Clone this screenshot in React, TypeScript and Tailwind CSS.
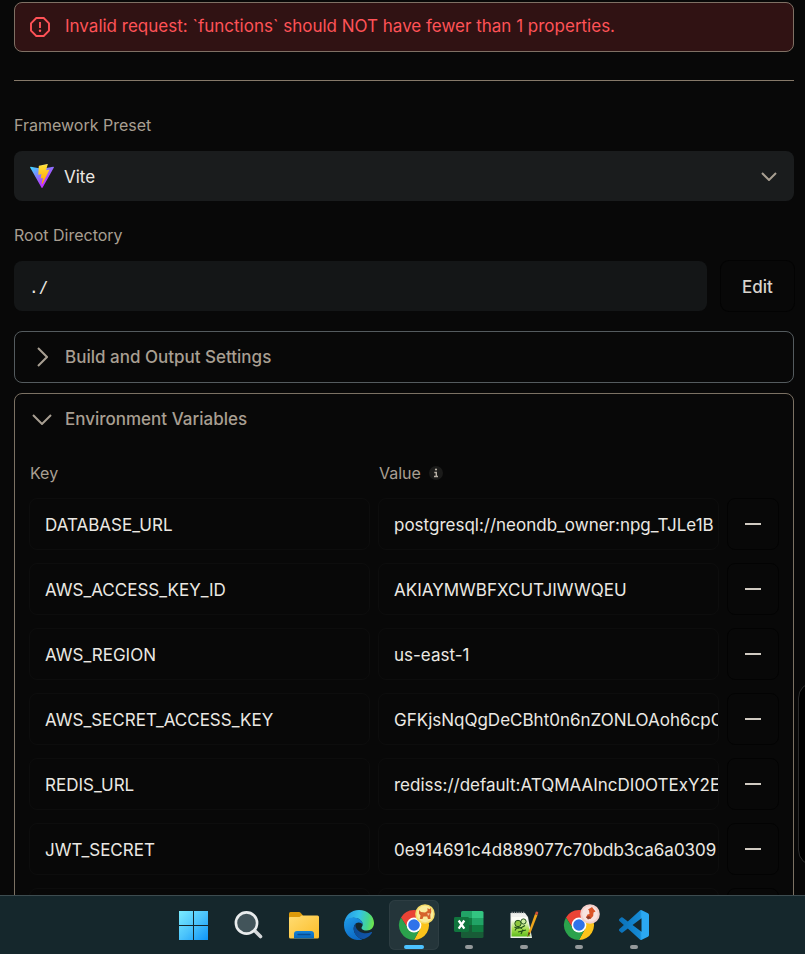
import type { ReactNode } from "react";

const variables = [
  { key: "DATABASE_URL", value: "postgresql://neondb_owner:npg_TJLe1B" },
  { key: "AWS_ACCESS_KEY_ID", value: "AKIAYMWBFXCUTJIWWQEU" },
  { key: "AWS_REGION", value: "us-east-1" },
  { key: "AWS_SECRET_ACCESS_KEY", value: "GFKjsNqQgDeCBht0n6nZONLOAoh6cpC" },
  { key: "REDIS_URL", value: "rediss://default:ATQMAAIncDI0OTExY2E" },
  { key: "JWT_SECRET", value: "0e914691c4d889077c70bdb3ca6a0309" },
  { key: "", value: "" },
];

function ErrorIcon() {
  return (
    <svg className="size-5 shrink-0" viewBox="0 0 20 20" fill="none" stroke="currentColor" strokeWidth="1.9">
      <path d="M6.3 1h7.4L19 6.3v7.4L13.7 19H6.3L1 13.7V6.3z" />
      <path d="M10 5v6" />
      <circle cx="10" cy="13.7" r="1.2" fill="currentColor" stroke="none" />
    </svg>
  );
}

function ViteLogo({ className }: { className: string }) {
  return (
    <svg className={className} viewBox="0 0 256 257">
      <defs>
        <linearGradient id="viteA" x1="-.8%" x2="57.6%" y1="7.7%" y2="78.4%">
          <stop offset="0" stopColor="#41d1ff" />
          <stop offset="1" stopColor="#bd34fe" />
        </linearGradient>
        <linearGradient id="viteB" x1="43.4%" x2="50.3%" y1="2.2%" y2="89%">
          <stop offset="0" stopColor="#ffea83" />
          <stop offset=".083" stopColor="#ffdd35" />
          <stop offset="1" stopColor="#ffa800" />
        </linearGradient>
      </defs>
      <path
        fill="url(#viteA)"
        d="M255.153 37.938L134.897 252.976c-2.483 4.44-8.862 4.466-11.382.048L.875 37.958c-2.746-4.814 1.371-10.646 6.827-9.67l120.385 21.517a6.537 6.537 0 0 0 2.322-.004l117.867-21.483c5.438-.991 9.574 4.796 6.877 9.62Z"
      />
      <path
        fill="url(#viteB)"
        d="M185.432.063L96.44 17.501a3.268 3.268 0 0 0-2.634 3.014l-5.474 92.456a3.268 3.268 0 0 0 3.997 3.378l24.777-5.718c2.318-.535 4.413 1.507 3.936 3.838l-7.361 36.047c-.495 2.426 1.782 4.5 4.151 3.78l15.304-4.649c2.372-.72 4.652 1.36 4.15 3.788l-11.698 56.621c-.732 3.542 3.979 5.473 5.943 2.437l1.313-2.028l72.516-144.72c1.215-2.423-.88-5.186-3.54-4.672l-25.505 4.922c-2.396.462-4.435-1.77-3.759-4.114l16.646-57.705c.677-2.35-1.37-4.583-3.769-4.113Z"
      />
    </svg>
  );
}

function Chevron({ className, d, box }: { className: string; d: string; box: string }) {
  return (
    <svg className={className} viewBox={box} fill="none" stroke="currentColor" strokeWidth="2">
      <path d={d} />
    </svg>
  );
}

function StartIcon() {
  return (
    <svg className="size-[30px]" viewBox="0 0 30 30">
      <defs>
        <linearGradient id="win" x1="0" y1="0" x2="30" y2="30" gradientUnits="userSpaceOnUse">
          <stop offset="0" stopColor="#7ceeff" />
          <stop offset=".5" stopColor="#4cc4fb" />
          <stop offset="1" stopColor="#0c93f8" />
        </linearGradient>
      </defs>
      <path fill="url(#win)" d="M0 1h14v14H0zM15 1h14v14H15zM0 16h14v14H0zM15 16h14v14H15z" />
    </svg>
  );
}

function SearchIcon() {
  return (
    <svg className="size-[30px]" viewBox="0 0 30 30" fill="none">
      <path d="M20 20l6.500 6.500" stroke="#d5d8da" strokeWidth="3.6" strokeLinecap="round" />
      <circle cx="12.500" cy="13" r="10.600" fill="#42545a" stroke="#e9eced" strokeWidth="2.6" />
    </svg>
  );
}

function FolderIcon() {
  return (
    <svg className="size-[30px]" viewBox="0 0 30 30">
      <defs>
        <linearGradient id="folder" x1="0" y1="0" x2="1" y2="1">
          <stop offset="0" stopColor="#ffdc72" />
          <stop offset="1" stopColor="#fcbd28" />
        </linearGradient>
        <linearGradient id="tray" x1="0" y1="0" x2="0" y2="1">
          <stop offset="0" stopColor="#1683d8" />
          <stop offset="1" stopColor="#0a66b8" />
        </linearGradient>
      </defs>
      <path d="M0 3.500Q0 2 1.500 2H10Q11 2 11.800 2.900L14 5.500V12H0z" fill="#dc9a0a" />
      <path d="M0 8Q0 7 1 7H9.500Q10.500 7 11.300 6.400L12.500 5.500H28.500Q30 5.500 30 7V27Q30 28.500 28.500 28.500H1.500Q0 28.500 0 27z" fill="url(#folder)" />
      <path d="M5 28.500V24Q5 21 8 21H22Q25 21 25 24V28.500z" fill="url(#tray)" />
      <path d="M9 24.500H21" stroke="#0a4d92" strokeWidth="1.300" strokeLinecap="round" />
    </svg>
  );
}

function EdgeIcon() {
  return (
    <svg className="size-[30px]" viewBox="0 0 30 30">
      <defs>
        <linearGradient id="edgeTop" x1="2" y1="8" x2="29" y2="13" gradientUnits="userSpaceOnUse">
          <stop offset="0" stopColor="#269fe8" />
          <stop offset=".45" stopColor="#35c2e8" />
          <stop offset=".8" stopColor="#45d58f" />
          <stop offset="1" stopColor="#6be34f" />
        </linearGradient>
        <linearGradient id="edgeLeft" x1="3" y1="9" x2="15" y2="29" gradientUnits="userSpaceOnUse">
          <stop offset="0" stopColor="#1c96e4" />
          <stop offset="1" stopColor="#0b66c4" />
        </linearGradient>
        <linearGradient id="edgeLow" x1="10" y1="15" x2="28" y2="27" gradientUnits="userSpaceOnUse">
          <stop offset="0" stopColor="#0c4a92" />
          <stop offset="1" stopColor="#1257ad" />
        </linearGradient>
      </defs>
      <path d="M0 14C1 5.500 7 0 15 0C23.500 0 30 6 30 13C30 17.500 27 20.500 23 20.500C19.500 20.500 17.500 19.300 17.500 17.900C17.500 17 18.700 16.500 18.700 14.500C18.700 10.500 14.500 7.700 9.500 7.700C5.500 7.700 2 9.800 0 14z" fill="url(#edgeTop)" />
      <path d="M0 15C0 10.500 4 7.500 9.300 7.500C14.500 7.500 18.700 10.500 18.700 14.500C17 11.900 12.500 11.600 10.500 15C8 19.500 11 26.500 18.500 29.600C8.500 32 0 25 0 15z" fill="url(#edgeLeft)" />
      <path d="M12.800 12.800C9 15.300 8.800 21 12 25C15 28.900 19.500 30 22 28C24.800 26.800 26.800 24.800 28 22.700C28.300 22.100 27.800 21.800 27.200 22.100C20.500 25.300 12.500 21.500 11.600 16.200C11.400 14.800 11.900 13.500 12.800 12.800z" fill="url(#edgeLow)" />
    </svg>
  );
}

function ChromeIcon({ children }: { children: ReactNode }) {
  return (
    <svg className="size-[42px]" viewBox="-6 -6 42 42">
      <path d="M15 8H28.300A15 15 0 0 1 15 30L21.200 18.500z" fill="#fbc31a" />
      <path d="M2 7.500A15 15 0 0 1 28.300 8H15L9 18.500z" fill="#ea4335" />
      <path d="M2 7.500L9 18.500L21.200 18.500L15 30A15 15 0 0 1 2 7.500z" fill="#2ba24c" />
      <circle cx="15" cy="15" r="7.400" fill="#fff" />
      <circle cx="15" cy="15" r="5.800" fill="#2f73ea" />
      {children}
    </svg>
  );
}

function FoxBadge() {
  return (
    <g>
      <circle cx="26" cy="4" r="9.800" fill="#f6dc68" />
      <circle cx="26" cy="4" r="8.300" fill="#faec9c" />
      <path d="M20 0L22 2L26 2.500L28.500 1L28.500 -2L30.300 -.800L32 -2L32.300 2L31.300 4.500L31.500 9H29L28.200 6.500H24.500L23.500 9H20.800L21.500 5.500L20 3.500z" fill="#d5632b" />
      <path d="M28.300 3L31 3.500L29 6z" fill="#f4c79c" />
    </g>
  );
}

function PinkBadge() {
  return (
    <g>
      <circle cx="26" cy="4" r="9.800" fill="#f3cfca" />
      <circle cx="26" cy="4" r="7.800" fill="#f8e3df" />
      <path d="M28 -3L31.500 1.500L29.500 2.500L29.200 6L26.500 9L22 7.500L23.500 4.500L25.500 4L25 .500L24 -.500z" fill="#db5427" />
      <path d="M22 7L25 6L27 8L24 9.500z" fill="#8d3a2a" />
    </g>
  );
}

function ExcelIcon() {
  return (
    <svg className="size-[30px]" viewBox="0 0 30 30">
      <path d="M8.500 1H19V8H7V2.500Q7 1 8.500 1z" fill="#21a366" />
      <path d="M18 1H28Q29.500 1 29.500 2.500V8H18z" fill="#33c481" />
      <path d="M7 8H18V15H7z" fill="#107c41" />
      <path d="M18 8H29.500V15H18z" fill="#21a366" />
      <path d="M7 15H18V22H7z" fill="#185c37" />
      <path d="M18 15H29.500V22H18z" fill="#107c41" />
      <path d="M7 22H29.500V26.500Q29.500 28 28 28H8.500Q7 28 7 26.500z" fill="#185c37" />
      <rect x="0" y="7" width="15" height="15" rx="1.400" fill="#10743d" />
      <path d="M4.700 10.500L10.300 18.700M10.300 10.500L4.700 18.700" stroke="#fff" strokeWidth="2.300" />
    </svg>
  );
}

function NotepadIcon() {
  return (
    <svg className="size-[30px]" viewBox="0 0 30 30">
      <defs>
        <linearGradient id="note" x1="0" y1="0" x2="0" y2="1">
          <stop offset=".15" stopColor="#fbfdf6" />
          <stop offset=".6" stopColor="#a9e052" />
          <stop offset="1" stopColor="#5dbb1c" />
        </linearGradient>
      </defs>
      <path d="M1.500 3H16L19 7L23 28H1.500z" fill="#eef0ec" />
      <path d="M2.500 7H18L21.500 26.500H2.500z" fill="url(#note)" />
      <path d="M2.500 2.500H16" stroke="#8c9294" strokeWidth="1.600" strokeDasharray="1.300 1" />
      <circle cx="9" cy="13.500" r="3.200" fill="#8dc63d" stroke="#24531b" strokeWidth="1" />
      <circle cx="14.500" cy="11.500" r="2.600" fill="#cdeea0" stroke="#24531b" strokeWidth="1" />
      <path d="M5.500 17Q10 20 16 15.500M6 20.500Q8 16 13 18.500M9 22L17 20M12 24L14 19.500" fill="none" stroke="#24531b" strokeWidth="1.200" />
      <path d="M26 4L19.500 22L18.500 27L21.500 23L28.500 5z" fill="#eda51c" />
      <path d="M26 4L28.500 5L29.300 2.700Q28.500 1 26.800 1.700z" fill="#d45238" />
      <path d="M19.500 22L18.500 27L21.500 23z" fill="#4d3716" />
    </svg>
  );
}

function CodeIcon() {
  return (
    <svg className="size-[30px]" viewBox="0 0 24 24">
      <defs>
        <linearGradient id="code" x1="0" y1="0" x2="1" y2="0">
          <stop offset="0" stopColor="#0a70b8" />
          <stop offset=".7" stopColor="#168bd5" />
          <stop offset=".76" stopColor="#2ba8f2" />
          <stop offset="1" stopColor="#2ba8f2" />
        </linearGradient>
      </defs>
      <path
        fill="url(#code)"
        d="M23.15 2.587L18.21.21a1.494 1.494 0 0 0-1.705.29l-9.46 8.63-4.12-3.128a.999.999 0 0 0-1.276.057L.327 7.261A1 1 0 0 0 .326 8.74L3.899 12 .326 15.26a1 1 0 0 0 .001 1.479L1.65 17.94a.999.999 0 0 0 1.276.057l4.12-3.128 9.46 8.63a1.492 1.492 0 0 0 1.704.29l4.942-2.377A1.5 1.5 0 0 0 24 20.06V3.939a1.5 1.5 0 0 0-.85-1.352zm-5.146 14.861L10.826 12l7.178-5.448v10.896z"
      />
    </svg>
  );
}

const apps: { name: string; icon: ReactNode; state: "closed" | "open" | "active" }[] = [
  { name: "Start", icon: <StartIcon />, state: "closed" },
  { name: "Search", icon: <SearchIcon />, state: "closed" },
  { name: "File Explorer", icon: <FolderIcon />, state: "closed" },
  { name: "Edge", icon: <EdgeIcon />, state: "closed" },
  { name: "Chrome", icon: <ChromeIcon><FoxBadge /></ChromeIcon>, state: "active" },
  { name: "Excel", icon: <ExcelIcon />, state: "open" },
  { name: "Notepad++", icon: <NotepadIcon />, state: "open" },
  { name: "Chrome, second profile", icon: <ChromeIcon><PinkBadge /></ChromeIcon>, state: "open" },
  { name: "Visual Studio Code", icon: <CodeIcon />, state: "open" },
];

const marker = {
  closed: "hidden",
  open: "h-1 w-2 bg-[#94999b]",
  active: "h-1 w-5 bg-[#4cc2ff]",
};

export default function App() {
  return (
    <div className="relative flex h-screen flex-col overflow-hidden bg-[#080808] font-['Inter','Liberation_Sans',sans-serif] text-[17px] leading-6 text-[#ebe8e3]">
      <main className="min-h-0 flex-1 overflow-hidden pt-0.5 pr-[11px] pl-[14px]">
        <div role="alert" className="flex h-[50px] items-center gap-[15px] rounded-lg border border-[#7f7064] bg-[#301213] px-[15px] text-[#ff5257]">
          <ErrorIcon />
          <p className="truncate pb-0.5">Invalid request: `functions` should NOT have fewer than 1 properties.</p>
        </div>
        <hr className="mt-7 border-[#867969]" />

        <label htmlFor="preset" className="mt-8 block text-base leading-6 text-[#a89f92]">Framework Preset</label>
        <div className="relative mt-[14px]">
          <select id="preset" defaultValue="vite" className="h-[50px] w-full appearance-none rounded-lg bg-[#1a1c1d] pt-0.5 pr-12 pl-[50px] outline-none">
            <option value="vite">Vite</option>
          </select>
          <ViteLogo className="pointer-events-none absolute top-[13px] left-4 size-6" />
          <Chevron className="pointer-events-none absolute top-[21px] right-[17px] h-[9px] w-4 text-[#a89f92]" box="0 0 16 9" d="M1 1l7 7 7-7" />
        </div>

        <label htmlFor="root" className="mt-[22px] block text-base leading-6 text-[#a89f92]">Root Directory</label>
        <div className="mt-[14px] flex gap-[14px]">
          <input id="root" readOnly defaultValue="./" className="h-[50px] min-w-0 flex-1 rounded-lg bg-[#141617] px-[15px] pt-0.5 font-['DejaVu_Sans_Mono',monospace] text-base outline-none" />
          <button type="button" className="h-[50px] w-[73px] rounded-lg pt-0.5 font-medium text-[#d8d4cd] ring-1 ring-[#030303]">Edit</button>
        </div>

        <button type="button" className="mt-5 flex h-[52px] w-full items-center gap-[13px] rounded-lg border border-[#545b5e] px-[17px] font-medium text-[#a89f92]">
          <span className="flex w-5 justify-center">
            <Chevron className="h-5 w-[11px]" box="0 0 11 20" d="M1 1l9 9-9 9" />
          </span>
          Build and Output Settings
        </button>

        <section className="mt-2.5 rounded-lg border border-[#7b7163]">
          <button type="button" aria-expanded="true" className="flex h-[50px] w-full items-center gap-[13px] px-[17px] font-medium text-[#a89f92]">
            <Chevron className="h-[11px] w-5" box="0 0 20 11" d="M1 1l9 9 9-9" />
            Environment Variables
          </button>
          <div className="grid grid-cols-[1fr_1fr_52px] gap-x-2 gap-y-[13px] px-[14px] pb-4">
            <div className="mt-[17px] h-6 pl-px text-base leading-6 text-[#a89f92]">Key</div>
            <div className="col-span-2 mt-[17px] flex h-6 items-center gap-2 pl-px text-base leading-6 text-[#a89f92]">
              Value
              <svg className="size-[14px]" viewBox="0 0 14 14" role="img" aria-label="About values">
                <circle cx="7" cy="7" r="7" fill="#1b1b1a" />
                <path d="M5.300 6.500H7.300V10.500M5 10.500H9" fill="none" stroke="#b8b1a6" strokeWidth="1.400" />
                <circle cx="7" cy="3.500" r="1.100" fill="#b8b1a6" />
              </svg>
            </div>
            {variables.map((v, i) => (
              <div key={i} className="contents">
                <input aria-label={`Key ${i + 1}`} defaultValue={v.key} className="h-[52px] min-w-0 rounded-lg border border-[#0d0d0d] bg-transparent px-[15px] pt-0.5 outline-none" />
                <input aria-label={`Value ${i + 1}`} defaultValue={v.value} className="h-[52px] min-w-0 rounded-lg border border-[#0d0d0d] bg-transparent pt-0.5 pl-[15px] outline-none" />
                <button type="button" aria-label={`Remove variable ${i + 1}`} className="flex h-[52px] items-center justify-center rounded-lg border border-[#030303]">
                  <span className="h-0.5 w-4 bg-[#d0cac1]" />
                </button>
              </div>
            ))}
          </div>
        </section>
      </main>

      <div className="absolute top-[682px] -right-3 h-[184px] w-[19px] rounded-l-2xl border border-[#2b2b2b] bg-black" />

      <footer className="flex h-[59px] shrink-0 items-start justify-center gap-[5px] border-t border-[#3d4c50] bg-[#15272c] pt-1 pl-[22px]">
        {apps.map((app) => (
          <button
            key={app.name}
            type="button"
            aria-label={app.name}
            className={`relative flex size-[50px] items-center justify-center rounded-md ${app.state === "active" ? "bg-[#24353a] ring-1 ring-[#2d3d42] ring-inset" : ""}`}
          >
            {app.icon}
            <span className={`absolute bottom-px left-1/2 -translate-x-1/2 rounded-full ${marker[app.state]}`} />
          </button>
        ))}
      </footer>
    </div>
  );
}
